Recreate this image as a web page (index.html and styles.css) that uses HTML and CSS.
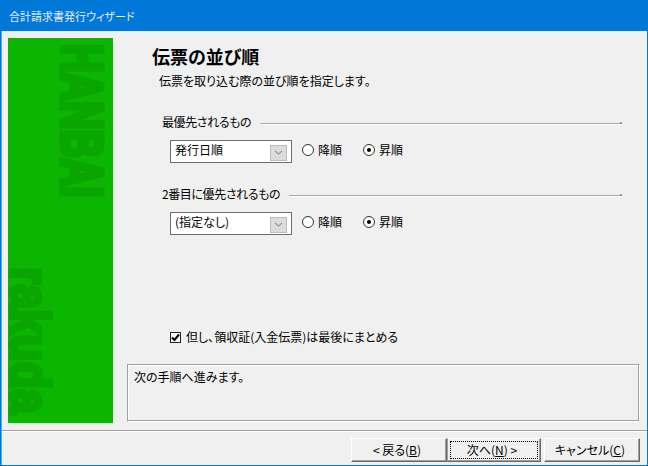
FILE: index.html
```html
<!DOCTYPE html>
<html lang="ja">
<head>
<meta charset="utf-8">
<title>合計請求書発行ウィザード</title>
<link rel="stylesheet" href="styles.css">
</head>
<body>
<div class="window">
  <header class="titlebar">合計請求書発行ウィザード</header>
  <div class="client">
    <div class="body">
      <aside class="side">
        <span class="mark mark-top">HANBAI</span>
        <span class="mark mark-bottom">rakuda</span>
      </aside>
      <main class="pane">
        <div class="intro">
          <h1 class="heading">伝票の並び順</h1>
          <p class="desc">伝票を取り込む際の並び順を指定します。</p>
        </div>
        <section class="group">
          <div class="legend"><span>最優先されるもの</span><i class="rule"></i></div>
          <div class="row">
            <div class="combo"><span class="value">発行日順</span><b class="arrow"><svg width="9" height="5" viewBox="0 0 9 5"><path d="M1 1l3.5 3L8 1" fill="none" stroke="#777"/></svg></b></div>
            <span class="radio"><i class="dot"></i>降順</span>
            <span class="radio"><i class="dot on"></i>昇順</span>
          </div>
        </section>
        <section class="group group-two">
          <div class="legend"><span>2番目に優先されるもの</span><i class="rule"></i></div>
          <div class="row">
            <div class="combo"><span class="value">(指定なし)</span><b class="arrow"><svg width="9" height="5" viewBox="0 0 9 5"><path d="M1 1l3.5 3L8 1" fill="none" stroke="#777"/></svg></b></div>
            <span class="radio"><i class="dot"></i>降順</span>
            <span class="radio"><i class="dot on"></i>昇順</span>
          </div>
        </section>
        <label class="check"><i class="box"><svg width="9" height="9" viewBox="0 0 9 9"><path d="M1 4.5l2.5 2.5L8 1.5" fill="none" stroke="#000" stroke-width="2"/></svg></i>但し、領収証(入金伝票)は最後にまとめる</label>
        <div class="message">次の手順へ進みます。</div>
      </main>
    </div>
    <footer class="footer">
      <button class="btn btn-back">&lt; 戻る(<u>B</u>)</button>
      <button class="btn btn-next"><span class="focus">次へ(<u>N</u>) &gt;</span></button>
      <button class="btn btn-cancel">キャンセル(<u>C</u>)</button>
    </footer>
  </div>
</div>
</body>
</html>
```
FILE: styles.css
```css
* { box-sizing: border-box; }
html, body { margin: 0; padding: 0; }
body {
  width: 648px;
  height: 466px;
  overflow: hidden;
  font-family: "Noto Sans CJK JP", "Liberation Sans", sans-serif;
  font-size: 12px;
  font-feature-settings: "palt";
  line-height: 14px;
  color: #000;
}
.window {
  width: 648px;
  height: 466px;
  display: flex;
  flex-direction: column;
  background: #f0f0f0;
  border: 1px solid #0078d7;
  border-width: 0 1px 1px 1px;
}
.titlebar {
  height: 31px;
  margin: 0 -1px;
  padding: 0 9px;
  flex: none;
  display: flex;
  align-items: center;
  background: #0078d7;
  color: #e4effa;
  font-size: 11px;
}
.client {
  flex: 1;
  display: flex;
  flex-direction: column;
  border-left: 1px solid #5aa5e4;
  min-height: 0;
}
.body {
  flex: 1;
  display: flex;
  padding: 7px 7px 0 6px;
  gap: 14px;
  min-height: 0;
}
.side {
  position: relative;
  width: 105px;
  height: 385px;
  flex: none;
  background: #0cb500;
}
.mark {
  position: absolute;
  writing-mode: vertical-rl;
  font-family: "Liberation Sans", sans-serif;
  font-weight: 700;
  color: #0aa600;
  transform-origin: 0 0;
  white-space: nowrap;
}
.mark-top {
  left: 52px;
  top: 6px;
  font-size: 58px;
  line-height: 45px;
  -webkit-text-stroke: 5px #0aa600;
  transform: scaleY(.68);
}
.mark-bottom {
  left: 0;
  top: 229px;
  font-size: 56px;
  line-height: 45px;
  -webkit-text-stroke: 4px #0aa600;
  transform: scaleY(.8);
}
.pane {
  flex: 1;
  min-width: 0;
  display: flex;
  flex-direction: column;
}
.intro { padding: 8px 0 0 25px; height: 77px; }
.heading {
  margin: 0;
  font-size: 18px;
  line-height: 20px;
  font-weight: 700;
}
.desc { margin: 8px 0 0 7px; }
.group { padding-left: 35px; }
.group-two { margin-top: 24px; }
.legend {
  height: 14px;
  display: flex;
  align-items: center;
  gap: 9px;
  letter-spacing: -.4px;
  white-space: nowrap;
}
.rule {
  position: relative;
  flex: 1;
  height: 2px;
  margin: 3px 18px 0 0;
  background: linear-gradient(#a8a8a8 1px, #fff 1px);
}
.rule::after {
  content: "";
  position: absolute;
  right: -1px;
  top: -1px;
  border-left: 3px solid #808080;
  border-top: 1.5px solid transparent;
  border-bottom: 1.5px solid transparent;
}
.row {
  margin: 11px 0 0 8px;
  display: flex;
  align-items: center;
  height: 23px;
}
.combo {
  width: 122px;
  height: 23px;
  border: 1px solid #6e6e6e;
  background: #fff;
  display: flex;
  align-items: center;
  justify-content: space-between;
  padding: 0 4px;
  margin-right: 10px;
}
.value { margin-top: -3px; }
.arrow {
  width: 17px;
  height: 16px;
  margin-top: 2px;
  display: flex;
  align-items: center;
  justify-content: center;
  background: #dcdcdc;
  border: 1px solid #bdbdbd;
}
.radio {
  display: flex;
  align-items: center;
  width: 61px;
  height: 14px;
  margin-top: -4px;
}
.dot {
  width: 12px;
  height: 12px;
  margin-right: 4px;
  border: 1px solid #333;
  border-radius: 50%;
  background: #fff;
  display: flex;
  align-items: center;
  justify-content: center;
}
.dot.on::after {
  content: "";
  width: 4px;
  height: 4px;
  border-radius: 50%;
  background: #000;
}
.check {
  margin: 95px 0 0 43px;
  height: 14px;
  display: flex;
  align-items: center;
}
.box {
  width: 11px;
  height: 11px;
  margin-right: 5px;
  border: 1px solid #222;
  background: #fff;
  display: flex;
  align-items: center;
  justify-content: center;
}
.message {
  margin: 20px 0 0 0;
  height: 58px;
  padding: 5px 0 0 6px;
  border: 1px solid;
  border-color: #a0a0a0 #fff #fff #a0a0a0;
  box-shadow: inset -1px -1px 0 #a0a0a0, inset 1px 1px 0 #fff;
}
.footer {
  flex: none;
  height: 35px;
  border-top: 1px solid #a0a0a0;
  box-shadow: inset 0 1px 0 #fff;
  padding: 7px 7px 0 0;
  display: flex;
  justify-content: flex-end;
}
.btn {
  height: 24px;
  padding: 0 4px 0 0;
  font: inherit;
  font-feature-settings: "palt";
  color: #000;
  background: #f0f0f0;
  border: 1px solid;
  border-color: #fff #696969 #696969 #fff;
  box-shadow: inset -1px -1px 0 #a0a0a0;
  display: flex;
  align-items: center;
  justify-content: center;
}
.btn-back { width: 96px; }
.btn-next { width: 94px; margin-right: 3px; border-color: #fff #696969 #696969 #a0a0a0; padding: 2px; }
.btn-cancel { width: 96px; }
.focus {
  width: 100%;
  height: 100%;
  padding-right: 4px;
  border: 1px dotted #000;
  display: flex;
  align-items: center;
  justify-content: center;
}
```
